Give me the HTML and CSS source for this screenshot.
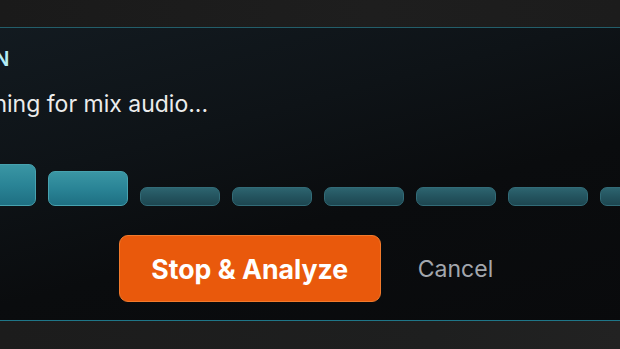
FILE: index.html
```html
<!DOCTYPE html>
<html>
<head>
<meta charset="utf-8">
<link rel="stylesheet" href="styles.css">
</head>
<body>
<div class="top-strip"></div>
<section class="panel">
  <div class="label">LISTEN</div>
  <div class="status">Listening for mix audio...</div>
  <div class="meter">
    <div class="bar tall b1"></div>
    <div class="bar tall b2"></div>
    <div class="bar low"></div>
    <div class="bar low"></div>
    <div class="bar low"></div>
    <div class="bar low"></div>
    <div class="bar low"></div>
    <div class="bar low"></div>
  </div>
  <div class="actions">
    <button class="btn-primary">Stop &amp; Analyze</button>
    <button class="btn-ghost">Cancel</button>
  </div>
</section>
<div class="bottom-strip"></div>
</body>
</html>
```

FILE: styles.css
```css
html, body {
  margin: 0;
  padding: 0;
  height: 100%;
  overflow: hidden;
}
body {
  background: #1c1c1c;
  font-family: Inter, "Noto Sans", sans-serif;
}
.top-strip {
  height: 27px;
  background: linear-gradient(90deg, #1a1a1a 0%, #1e1e1e 60%, #1c1c1c 100%);
}
.panel {
  margin: 0 -60px;
  border-top: 1px solid #235e6a;
  border-bottom: 1px solid #1f7688;
  height: 292px;
  box-sizing: content-box;
  background: linear-gradient(165deg, #131b21 0%, #0e1317 35%, #0a0c0e 60%, #090a0c 100%);
  padding: 0 16px;
  display: flex;
  flex-direction: column;
}
.label {
  margin-top: 19px;
  margin-left: -22px;
  font-size: 20px;
  line-height: 24px;
  font-weight: 600;
  letter-spacing: 1px;
  color: #b4ecf3;
}
.status {
  margin-top: 19px;
  margin-left: -14px;
  font-size: 23px;
  line-height: 28px;
  color: #ececec;
}
.meter {
  margin-top: 46px;
  height: 42px;
  display: flex;
  align-items: flex-end;
  gap: 12px;
}
.bar {
  width: 80px;
  flex: none;
  box-sizing: border-box;
}
.tall {
  border-radius: 7px;
  background: linear-gradient(180deg, #3a96a4 0%, #2a8496 50%, #1e6f82 100%);
  border: 1px solid #47a2af;
}
.b1 { height: 42px; }
.b2 { height: 35px; }
.low {
  height: 19px;
  border-radius: 7px;
  background: linear-gradient(180deg, #2d646f 0%, #24545f 50%, #1d4650 100%);
  border: 1px solid #326b77;
}
.actions {
  margin-top: 29px;
  padding-left: 8px;
  display: flex;
  justify-content: center;
  align-items: center;
  gap: 21px;
}
.btn-primary {
  width: 262px;
  height: 67px;
  border-radius: 9px;
  border: 1px solid #f27a2c;
  background: #e9590c;
  color: #ffffff;
  font-family: Inter, "Noto Sans", sans-serif;
  font-weight: 700;
  font-size: 26.7px;
  cursor: pointer;
}
.btn-ghost {
  background: transparent;
  border: none;
  padding: 0 16px;
  color: #a3a7ad;
  font-family: Inter, "Noto Sans", sans-serif;
  font-size: 23px;
  height: 67px;
}
.bottom-strip {
  height: 40px;
  background: linear-gradient(90deg, #1c1c1c 0%, #1e1f1f 70%, #222 100%);
}
```
